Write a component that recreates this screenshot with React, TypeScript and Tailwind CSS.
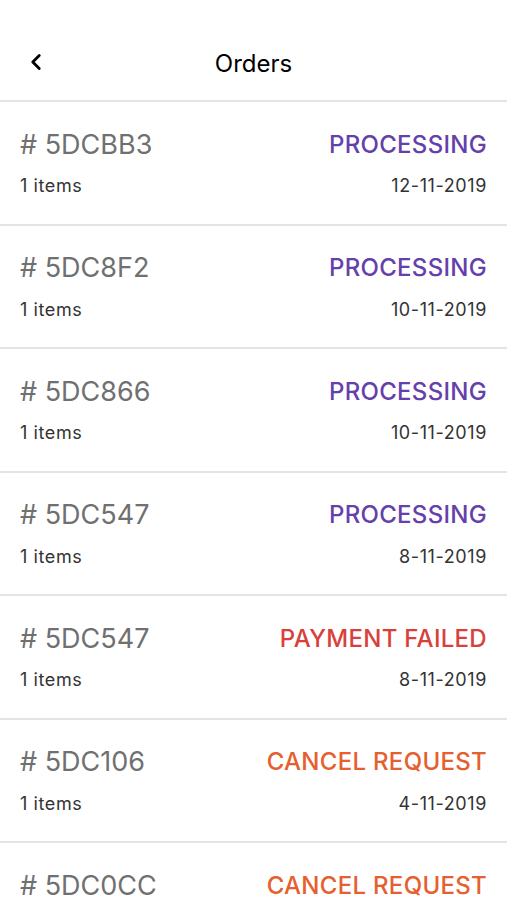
import { ChevronLeft } from 'lucide-react';

type Order = { id: string; status: string; tone: 'purple' | 'red' | 'orange'; date: string };

const orders: Order[] = [
  { id: '5DCBB3', status: 'PROCESSING', tone: 'purple', date: '12-11-2019' },
  { id: '5DC8F2', status: 'PROCESSING', tone: 'purple', date: '10-11-2019' },
  { id: '5DC866', status: 'PROCESSING', tone: 'purple', date: '10-11-2019' },
  { id: '5DC547', status: 'PROCESSING', tone: 'purple', date: '8-11-2019' },
  { id: '5DC547', status: 'PAYMENT FAILED', tone: 'red', date: '8-11-2019' },
  { id: '5DC106', status: 'CANCEL REQUEST', tone: 'orange', date: '4-11-2019' },
  { id: '5DC0CC', status: 'CANCEL REQUEST', tone: 'orange', date: '2-11-2019' },
];

const toneClass = {
  purple: 'text-[#6540ab]',
  red: 'text-[#d8413b]',
  orange: 'text-[#e5602e]',
};

export default function App() {
  return (
    <div className="h-[900px] overflow-hidden bg-white font-['Inter',sans-serif]">
      <header className="relative flex h-[102px] items-center justify-center border-b-2 border-[#e4e4e4] pt-[28px]">
        <button className="absolute left-[23px] top-[49px] text-black">
          <ChevronLeft size={26} strokeWidth={2.6} />
        </button>
        <h1 className="text-[24px] font-normal text-black">Orders</h1>
      </header>

      <ul>
        {orders.map((o, i) => (
          <li key={i} className="flex h-[123.5px] flex-col justify-center border-b-2 border-[#e4e4e4] px-[20px] pb-[2px]">
            <div className="flex items-center justify-between">
              <span className="text-[27px] text-[#707070]"># {o.id}</span>
              <span className={`text-[24px] font-medium tracking-[0.3px] ${toneClass[o.tone]}`}>{o.status}</span>
            </div>
            <div className="mt-[7px] flex items-center justify-between text-[18px] tracking-[0.6px] text-[#333]">
              <span>1 items</span>
              <span>{o.date}</span>
            </div>
          </li>
        ))}
      </ul>
    </div>
  );
}
